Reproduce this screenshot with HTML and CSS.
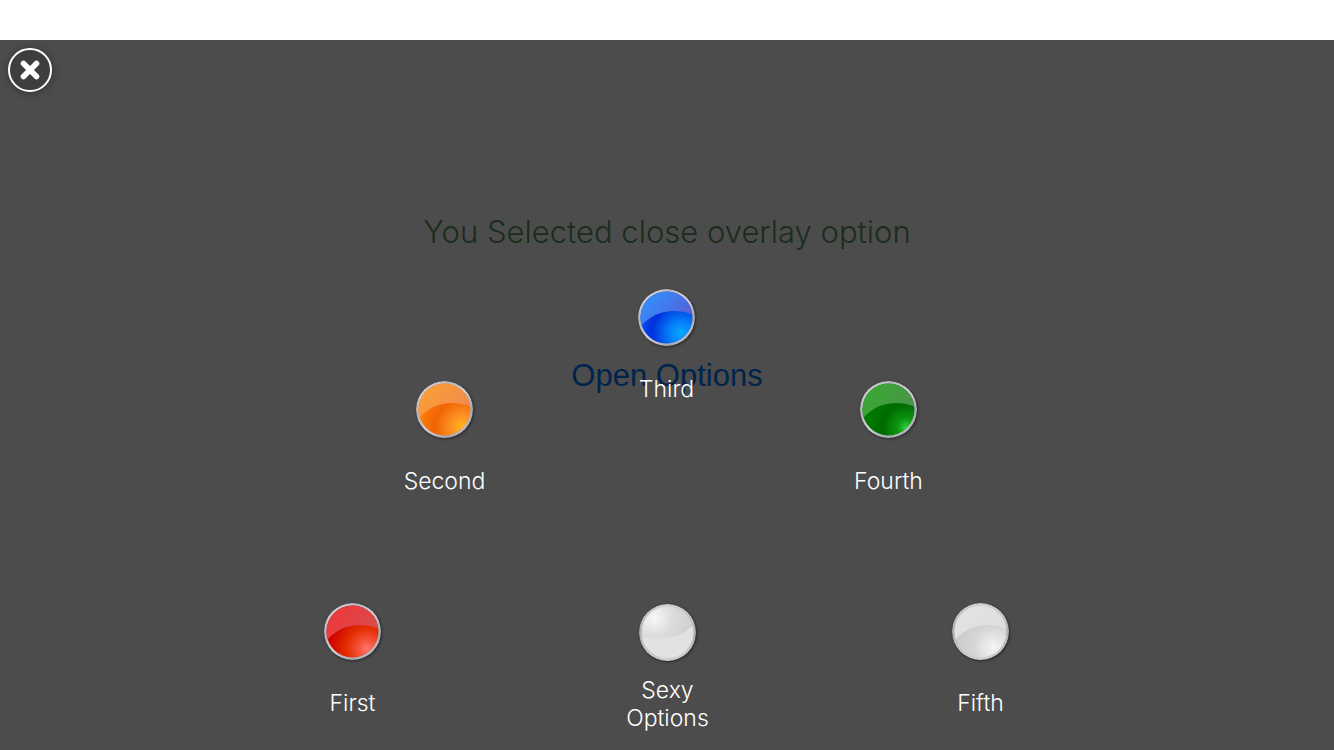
FILE: index.html
```html
<!DOCTYPE html>
<html lang="en">
<head>
<meta charset="utf-8">
<meta name="viewport" content="width=device-width, initial-scale=1">
<title>Options</title>
<link rel="stylesheet" href="styles.css">
</head>
<body>
<svg class="defs" width="0" height="0" aria-hidden="true">
  <defs>
    <linearGradient id="rim" x1="0" y1="0" x2="1" y2="1">
      <stop offset="0" stop-color="#e4e4e8"/><stop offset=".3" stop-color="#b4b4bc"/><stop offset=".5" stop-color="#d0ced6"/><stop offset=".75" stop-color="#a9a8b2"/><stop offset="1" stop-color="#d8d8dc"/>
    </linearGradient>
    <linearGradient id="rim-light" x1="0" y1="0" x2="0" y2="1">
      <stop offset="0" stop-color="#d2d0d6"/><stop offset=".5" stop-color="#aeacb8"/><stop offset="1" stop-color="#d2d0d6"/>
    </linearGradient>
    <radialGradient id="red" cx=".78" cy=".83" r=".72">
      <stop offset="0" stop-color="#ff7468"/><stop offset=".3" stop-color="#f04a30"/><stop offset=".55" stop-color="#e42e00"/><stop offset="1" stop-color="#d00000"/>
    </radialGradient>
    <radialGradient id="orange" cx=".84" cy=".83" r=".8">
      <stop offset="0" stop-color="#ffb61c"/><stop offset=".3" stop-color="#fc8e24"/><stop offset=".65" stop-color="#f06404"/><stop offset="1" stop-color="#fc7c08"/>
    </radialGradient>
    <radialGradient id="blue" cx=".78" cy=".8" r=".8">
      <stop offset="0" stop-color="#08a8ff"/><stop offset=".3" stop-color="#047cf8"/><stop offset=".7" stop-color="#0030dc"/><stop offset="1" stop-color="#0850f4"/>
    </radialGradient>
    <radialGradient id="green" cx=".84" cy=".85" r=".7">
      <stop offset="0" stop-color="#2ed23a"/><stop offset=".25" stop-color="#0c9410"/><stop offset=".65" stop-color="#006a00"/><stop offset="1" stop-color="#007800"/>
    </radialGradient>
    <radialGradient id="silver" cx=".75" cy=".8" r=".75">
      <stop offset="0" stop-color="#f6f6f6"/><stop offset=".5" stop-color="#d6d6d6"/><stop offset="1" stop-color="#cacaca"/>
    </radialGradient>
    <radialGradient id="pearl" cx=".25" cy=".22" r=".7">
      <stop offset="0" stop-color="#f8f8f8"/><stop offset=".5" stop-color="#dcdcdc"/><stop offset="1" stop-color="#d0d0d0"/>
    </radialGradient>
    <linearGradient id="gloss-red" x2="1" y2=".6"><stop offset="0" stop-color="#f23438"/><stop offset="1" stop-color="#d84c4c"/></linearGradient>
    <linearGradient id="gloss-orange" x2="1" y2=".6"><stop offset="0" stop-color="#ffa230"/><stop offset="1" stop-color="#f08a50"/></linearGradient>
    <linearGradient id="gloss-blue" x2="1" y2=".6"><stop offset="0" stop-color="#2c98ff"/><stop offset="1" stop-color="#5660dc"/></linearGradient>
    <linearGradient id="gloss-green" x2="1" y2=".6"><stop offset="0" stop-color="#34ae2c"/><stop offset="1" stop-color="#4c924c"/></linearGradient>
    <linearGradient id="gloss-silver" x2="1" y2=".6"><stop offset="0" stop-color="#e4e4e4"/><stop offset="1" stop-color="#dedede"/></linearGradient>
  </defs>
</svg>

<main class="page">
  <h1 class="message">You Selected close overlay option</h1>
  <button class="open" type="button">Open Options</button>
</main>

<div class="overlay" role="dialog" aria-label="Options">
  <button class="close" type="button" aria-label="Close">
    <svg viewBox="0 0 44 44" aria-hidden="true">
      <circle class="close-disc" cx="22" cy="22" r="21"/>
      <path class="close-cross" d="M15.500 15.500 28.500 28.500M28.500 15.500 15.500 28.500"/>
    </svg>
  </button>

  <button class="option first" type="button">
    <svg class="orb" viewBox="0 0 57 57" aria-hidden="true"><circle cx="28.500" cy="28.500" r="28.500" fill="url(#rim)"/><circle cx="28.500" cy="28.500" r="26" fill="url(#red)"/><path d="M3.700 36.500A26 26 0 1 1 54.300 25.500C36 18.500 16 22 3.700 36.500Z" fill="url(#gloss-red)"/></svg>
    <span class="label">First</span>
  </button>
  <button class="option second" type="button">
    <svg class="orb" viewBox="0 0 57 57" aria-hidden="true"><circle cx="28.500" cy="28.500" r="28.500" fill="url(#rim)"/><circle cx="28.500" cy="28.500" r="26" fill="url(#orange)"/><path d="M3.700 36.500A26 26 0 1 1 54.300 25.500C36 18.500 16 22 3.700 36.500Z" fill="url(#gloss-orange)"/></svg>
    <span class="label">Second</span>
  </button>
  <button class="option third" type="button">
    <svg class="orb" viewBox="0 0 57 57" aria-hidden="true"><circle cx="28.500" cy="28.500" r="28.500" fill="url(#rim)"/><circle cx="28.500" cy="28.500" r="26" fill="url(#blue)"/><path d="M3.700 36.500A26 26 0 1 1 54.300 25.500C36 18.500 16 22 3.700 36.500Z" fill="url(#gloss-blue)"/></svg>
    <span class="label">Third</span>
  </button>
  <button class="option fourth" type="button">
    <svg class="orb" viewBox="0 0 57 57" aria-hidden="true"><circle cx="28.500" cy="28.500" r="28.500" fill="url(#rim)"/><circle cx="28.500" cy="28.500" r="26" fill="url(#green)"/><path d="M3.700 36.500A26 26 0 1 1 54.300 25.500C36 18.500 16 22 3.700 36.500Z" fill="url(#gloss-green)"/></svg>
    <span class="label">Fourth</span>
  </button>
  <button class="option fifth" type="button">
    <svg class="orb" viewBox="0 0 57 57" aria-hidden="true"><circle cx="28.500" cy="28.500" r="28.500" fill="url(#rim-light)"/><circle cx="28.500" cy="28.500" r="26" fill="url(#silver)"/><path d="M3.700 36.500A26 26 0 1 1 54.300 25.500C36 18.500 16 22 3.700 36.500Z" fill="url(#gloss-silver)"/></svg>
    <span class="label">Fifth</span>
  </button>
  <button class="option hub" type="button">
    <svg class="orb" viewBox="0 0 57 57" aria-hidden="true"><circle cx="28.500" cy="28.500" r="28.500" fill="url(#rim-light)"/><circle cx="28.500" cy="28.500" r="26" fill="url(#pearl)"/><path d="M2.800 32.500A26 26 0 1 0 53.700 22C42 33.500 21 37.500 2.800 32.500Z" fill="#e2e2e2"/></svg>
    <span class="label">Sexy Options</span>
  </button>
</div>
</body>
</html>
```
FILE: styles.css
```css
* {
  box-sizing: border-box;
}

body {
  margin: 0;
  min-height: 100vh;
  background: #fff;
  font-family: Inter, "Liberation Sans", sans-serif;
  font-weight: 300;
}

button {
  margin: 0;
  padding: 0;
  border: 0;
  background: none;
  font: inherit;
  cursor: pointer;
}

.defs {
  position: absolute;
}

.page {
  display: flex;
  flex-direction: column;
  align-items: center;
  gap: 104px;
  padding-top: 212px;
}

.message {
  margin: 0;
  color: #5a965a;
  font-size: 31px;
  font-weight: 300;
  line-height: 40px;
}

.open {
  color: #007aff;
  font-size: 31px;
  font-weight: 400;
  line-height: 40px;
  font-family: "Liberation Sans", sans-serif;
}

.overlay {
  position: absolute;
  inset: 40px 0 0;
  overflow: hidden;
  background: rgba(0, 0, 0, 0.7);
}

.close {
  position: absolute;
  top: 8px;
  left: 8px;
  width: 44px;
  height: 44px;
  border-radius: 50%;
  box-shadow: 0 1px 8px rgba(0, 0, 0, 0.35);
}

.close svg {
  display: block;
}

.close-disc {
  fill: #3e3e3e;
  stroke: #fff;
  stroke-width: 2;
}

.close-cross {
  fill: none;
  stroke: #fff;
  stroke-width: 5.6;
  stroke-linecap: round;
}

/* Options fan out on a half circle around the hub at the bottom centre. */
.option {
  position: absolute;
  left: 50%;
  display: flex;
  flex-direction: column;
  align-items: center;
  width: 121px;
  color: #fff;
  font-size: 23px;
  line-height: 28px;
}

.orb {
  width: 57px;
  height: 57px;
  border-radius: 50%;
  box-shadow: 1px 1px 3px rgba(0, 0, 0, 0.45);
}

.label {
  width: 90px;
  margin-top: 29px;
}

.first {
  bottom: 33px;
  margin-left: -375px;
}

.second {
  bottom: 255px;
  margin-left: -283px;
}

.third {
  bottom: 347px;
  margin-left: -61px;
}

.fourth {
  bottom: 255px;
  margin-left: 161px;
}

.fifth {
  bottom: 33px;
  margin-left: 253px;
}

.hub {
  bottom: 18px;
  margin-left: -60px;
}

.hub .label {
  margin-top: 15px;
}
```
